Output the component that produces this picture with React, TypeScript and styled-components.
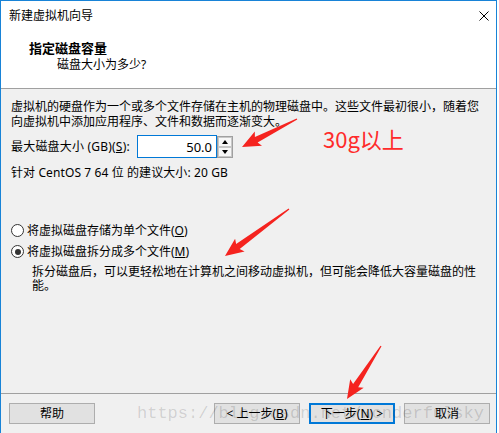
import React from "react";
import styled, { createGlobalStyle } from "styled-components";

const Global = createGlobalStyle`
  html, body { margin: 0; padding: 0; background: #ffffff; }
  body {
    font-family: "Noto Sans", "Noto Sans CJK SC", sans-serif;
    font-size: 12px;
    color: #000;
  }
  * { box-sizing: border-box; }
`;

const Window = styled.div`
  position: relative;
  width: 497px;
  height: 433px;
  border: 1px solid #1883d7;
  border-bottom: none;
  background: #f0f0f0;
  display: flex;
  flex-direction: column;
  overflow: hidden;
`;

const Header = styled.div`
  background: #ffffff;
  height: 88px;
  border-bottom: 1px solid #a0a0a0;
  display: flex;
  flex-direction: column;
`;

const TitleBar = styled.div`
  height: 30px;
  padding: 0 7px 0 8px;
  display: flex;
  align-items: center;
  justify-content: space-between;
  line-height: 16px;
`;

const CloseIcon = styled.svg`
  width: 10px;
  height: 10px;
  margin-top: -1px;
`;

const HeaderText = styled.div`
  padding: 9px 0 0 28px;
  display: flex;
  flex-direction: column;
`;

const Heading = styled.div`
  font-weight: bold;
  font-size: 13px;
  line-height: 16px;
`;

const SubHeading = styled.div`
  padding-left: 28px;
  margin-top: 1px;
  line-height: 16px;
`;

const Body = styled.div`
  flex: 1;
  padding: 10px 0 0 10px;
  display: flex;
  flex-direction: column;
`;

const Paragraph = styled.div<{ $width: number }>`
  max-width: ${(p) => p.$width}px;
  line-height: 15px;
`;

const SizeRow = styled.div`
  display: flex;
  align-items: center;
  margin-top: 6px;
  height: 23px;
`;

const Label = styled.span`
  line-height: 15px;
  min-width: 126px;
  letter-spacing: 0.2px;
`;

const Mn = styled.span`
  text-decoration: underline;
`;

const NumberBox = styled.div`
  width: 80px;
  height: 23px;
  border: 1px solid #0078d7;
  background: #ffffff;
  display: flex;
  align-items: center;
  justify-content: flex-end;
  padding-right: 4px;
  font-size: 13px;
`;

const Spin = styled.div`
  width: 16px;
  height: 22px;
  border: 1px solid #a0a0a0;
  display: flex;
  flex-direction: column;
  background: #f0f0f0;
`;

const SpinBtn = styled.div`
  flex: 1;
  display: flex;
  align-items: center;
  justify-content: center;
  border: 1px solid #c8c8c8;
  background: #f7f7f7;
`;

const Tri = styled.span<{ $up?: boolean }>`
  width: 0;
  height: 0;
  border-left: 3px solid transparent;
  border-right: 3px solid transparent;
  ${(p) => (p.$up ? "border-bottom: 4px solid #000;" : "border-top: 4px solid #000;")}
`;

const Recommend = styled.div`
  margin-top: 7px;
  line-height: 15px;
  letter-spacing: 0.1px;
`;

const RadioGroup = styled.div`
  margin-top: 43px;
  display: flex;
  flex-direction: column;
  gap: 6px;
`;

const RadioRow = styled.label`
  display: flex;
  align-items: center;
  gap: 3px;
  height: 15px;
  line-height: 15px;
`;

const RadioCircle = styled.span<{ $checked?: boolean }>`
  width: 13px;
  height: 13px;
  border-radius: 50%;
  border: 1px solid #333333;
  background: #ffffff;
  display: flex;
  align-items: center;
  justify-content: center;
  &::after {
    content: "";
    width: 6px;
    height: 6px;
    border-radius: 50%;
    background: ${(p) => (p.$checked ? "#333333" : "transparent")};
  }
`;

const Description = styled(Paragraph)`
  margin: 6px 0 0 21px;
  line-height: 14px;
`;

const Footer = styled.div`
  height: 40px;
  border-top: 1px solid #a0a0a0;
  padding: 9px 6px 9px 8px;
  display: flex;
  justify-content: space-between;
`;

const ButtonGroup = styled.div`
  display: flex;
  gap: 9px;
`;

const Button = styled.div<{ $default?: boolean }>`
  width: 86px;
  height: 21px;
  background: #e1e1e1;
  border: ${(p) => (p.$default ? "2px solid #0078d7" : "1px solid #adadad")};
  display: flex;
  align-items: center;
  justify-content: center;
  line-height: 15px;
`;

const Note = styled.div`
  position: absolute;
  left: 322px;
  top: 123px;
  color: #ff2a2a;
  font-family: "Noto Sans CJK SC", sans-serif;
  font-size: 22px;
  line-height: 28px;
`;

const Watermark = styled.div`
  position: absolute;
  left: 136px;
  top: 402px;
  font-family: "Liberation Mono", monospace;
  font-size: 17px;
  line-height: 22px;
  color: rgba(0, 0, 0, 0.14);
  pointer-events: none;
  white-space: nowrap;
`;

const Overlay = styled.svg`
  position: absolute;
  left: 0;
  top: 0;
  width: 499px;
  height: 433px;
  pointer-events: none;
`;

type Pt = [number, number];

function arrowPoints(t: Pt, p: Pt, head = 16, hw = 8, w = 3): string {
  const dx = p[0] - t[0];
  const dy = p[1] - t[1];
  const L = Math.hypot(dx, dy);
  const ux = dx / L;
  const uy = dy / L;
  const nx = -uy;
  const ny = ux;
  const bx = p[0] - ux * head;
  const by = p[1] - uy * head;
  const cx = p[0] - ux * head * 1.15;
  const cy = p[1] - uy * head * 1.15;
  const pts: Pt[] = [
    [t[0] + nx * 0.6, t[1] + ny * 0.6],
    [bx + nx * w, by + ny * w],
    [cx + nx * hw, cy + ny * hw],
    [p[0], p[1]],
    [cx - nx * hw, cy - ny * hw],
    [bx - nx * w, by - ny * w],
    [t[0] - nx * 0.6, t[1] - ny * 0.6],
  ];
  return pts.map((q) => `${q[0].toFixed(1)},${q[1].toFixed(1)}`).join(" ");
}

export default function App() {
  return (
    <>
      <Global />
      <Window>
        <Header>
          <TitleBar>
            <span>新建虚拟机向导</span>
            <CloseIcon viewBox="0 0 10 10">
              <path d="M0.5 0.5 L9.5 9.5 M9.5 0.5 L0.5 9.5" stroke="#000" strokeWidth="1" />
            </CloseIcon>
          </TitleBar>
          <HeaderText>
            <Heading>指定磁盘容量</Heading>
            <SubHeading>磁盘大小为多少?</SubHeading>
          </HeaderText>
        </Header>
        <Body>
          <Paragraph $width={470}>
            虚拟机的硬盘作为一个或多个文件存储在主机的物理磁盘中。这些文件最初很小，随着您向虚拟机中添加应用程序、文件和数据而逐渐变大。
          </Paragraph>
          <SizeRow>
            <Label>
              最大磁盘大小 (GB)(<Mn>S</Mn>):
            </Label>
            <NumberBox>50.0</NumberBox>
            <Spin>
              <SpinBtn>
                <Tri $up />
              </SpinBtn>
              <SpinBtn>
                <Tri />
              </SpinBtn>
            </Spin>
          </SizeRow>
          <Recommend>针对 CentOS 7 64 位 的建议大小: 20 GB</Recommend>
          <RadioGroup>
            <RadioRow>
              <RadioCircle />
              <span>
                将虚拟磁盘存储为单个文件(<Mn>O</Mn>)
              </span>
            </RadioRow>
            <RadioRow>
              <RadioCircle $checked />
              <span>
                将虚拟磁盘拆分成多个文件(<Mn>M</Mn>)
              </span>
            </RadioRow>
          </RadioGroup>
          <Description $width={450}>
            拆分磁盘后，可以更轻松地在计算机之间移动虚拟机，但可能会降低大容量磁盘的性能。
          </Description>
        </Body>
        <Footer>
          <Button>帮助</Button>
          <ButtonGroup>
            <Button>
              &lt; 上一步(<Mn>B</Mn>)
            </Button>
            <Button $default>
              下一步(<Mn>N</Mn>) &gt;
            </Button>
            <Button>取消</Button>
          </ButtonGroup>
        </Footer>
        <Note>30g以上</Note>
        <Watermark>https://blog.csdn.net/wonderfulsky</Watermark>
      </Window>
      <Overlay viewBox="0 0 499 433">
        <polygon points={arrowPoints([297, 119], [242, 147])} fill="#f5231f" />
        <polygon points={arrowPoints([289, 209], [225, 256])} fill="#f5231f" />
        <polygon points={arrowPoints([381, 346], [347, 399])} fill="#f5231f" />
      </Overlay>
    </>
  );
}
